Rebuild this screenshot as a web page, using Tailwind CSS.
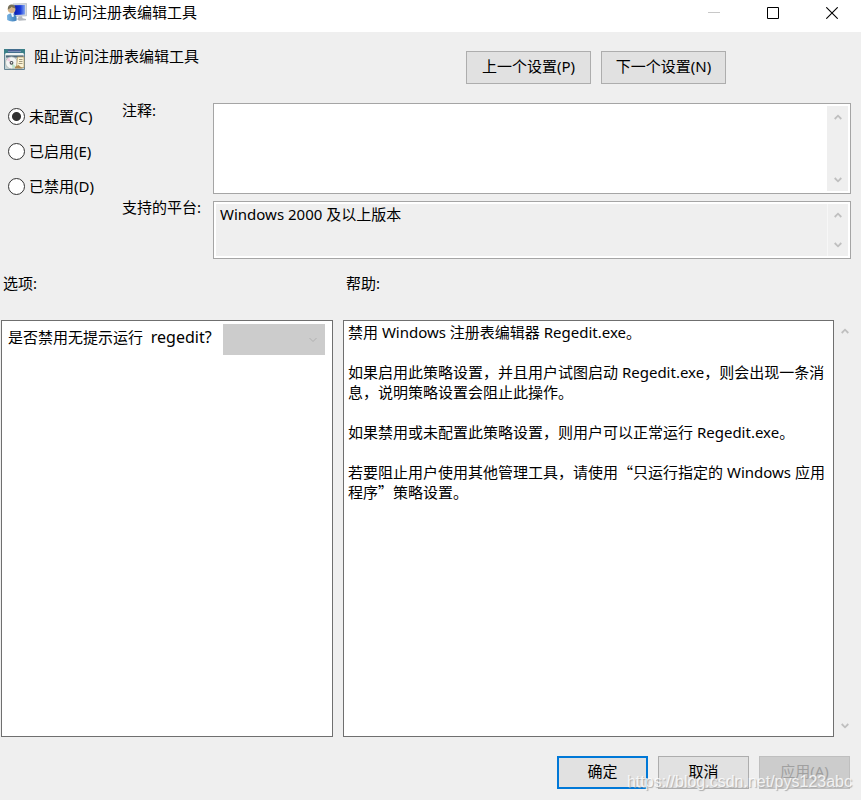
<!DOCTYPE html>
<html lang="zh-CN">
<head>
<meta charset="utf-8">
<meta name="viewport" content="width=device-width, initial-scale=1">
<title>阻止访问注册表编辑工具</title>
<script src="https://cdn.jsdelivr.net/npm/@tailwindcss/browser@4"></script>
</head>
<body class="relative flex min-h-screen flex-col bg-[#efefef] font-['Noto_Sans','Noto_Sans_CJK_SC',sans-serif] text-[15px] leading-5 text-black">
<svg class="hidden" aria-hidden="true">
  <symbol id="up" viewBox="0 0 8 6"><path d="M.7 5 4 1.7 7.3 5" fill="none" stroke="#bfbfbf" stroke-width="1.8"/></symbol>
  <symbol id="down" viewBox="0 0 8 6"><path d="M.7 1 4 4.3 7.3 1" fill="none" stroke="#bfbfbf" stroke-width="1.8"/></symbol>
</svg>

<header class="flex h-8 items-center bg-white pb-[6px] pl-[7px]">
  <svg class="h-5 w-5" viewBox="0 0 20 20" aria-hidden="true">
    <defs>
      <linearGradient id="screen" x1="0" x2="1"><stop offset="0" stop-color="#0a1fae"/><stop offset=".55" stop-color="#1738d8"/><stop offset="1" stop-color="#86a8f2"/></linearGradient>
      <linearGradient id="shirt" x1="0" x2="1"><stop offset="0" stop-color="#78b4e4"/><stop offset="1" stop-color="#3c7cb8"/></linearGradient>
    </defs>
    <path d="M6 .9 19.600.6V12.800L7 13.500z" fill="#d4dae0" stroke="#a6adb8" stroke-width=".6"/>
    <path d="M7.200 2.300 18 2V11.400L7.200 12z" fill="url(#screen)"/>
    <path d="M12 13.200h3l.6 2 3.400.8v1.200l-7 .6-2-1.600z" fill="#b4b9bf"/>
    <path d="M0 12.500c1-1.600 2.600-2 4.400-2 2.800 0 5 1.500 5.200 4.500v2.500C6.500 19 2.500 18.500.2 17z" fill="url(#shirt)"/>
    <circle cx="4.600" cy="6.300" r="3.800" fill="#d6b48a"/>
    <path d="M.8 6.500C.6 3 2.500 1.300 5 1.500c2.200.2 3.500 1.800 3.400 3.900-2-.2-3.200-.9-3.900-1.600C3.700 5.200 2.500 5.800.8 6.500z" fill="#76705a"/>
    <path d="M4 10.300 6 10.300 7 13.500 5 14z" fill="#f3f8fc"/>
  </svg>
  <h1 class="ml-[5px] flex-1 pb-[2px]">阻止访问注册表编辑工具</h1>
  <button class="flex h-[26px] w-[58px] items-center justify-center" aria-label="最小化" disabled>
    <svg class="h-3 w-3" viewBox="0 0 12 12"><path d="M0 5.500H12" stroke="#c8c8c8"/></svg>
  </button>
  <button class="flex h-[26px] w-[59px] items-center justify-center" aria-label="最大化">
    <svg class="h-3 w-3" viewBox="0 0 12 12"><path d="M.5.5H11.500V11.500H.5z" fill="none" stroke="#000"/></svg>
  </button>
  <button class="flex h-[26px] w-[59px] items-center justify-center" aria-label="关闭">
    <svg class="h-3 w-3" viewBox="0 0 12 12"><path d="M.3.3 11.700 11.700M11.700.3.3 11.700" stroke="#000" stroke-width="1.100"/></svg>
  </button>
</header>

<main class="flex flex-1 flex-col">
  <section class="flex items-start pt-[19px]">
    <div class="-mt-[2px] flex w-[466px] items-start pl-1">
      <svg class="h-[21px] w-[21px]" viewBox="0 0 21 21" aria-hidden="true">
        <path d="M.5.5H20.500V20.500H.5z" fill="#c4d2d4" stroke="#648292"/>
        <path d="M0 0H21V5H0z" fill="#3c7f88"/>
        <path d="M4 .5H16V3.500H4z" fill="#4a5f94"/>
        <path d="M4 2.500H17" stroke="#7c90b8"/>
        <path d="M1.500 4H19.500V6H1.500z" fill="#eef2f2"/>
        <path d="M2 6.500H19.500V8.500H2z" fill="#4f687c"/>
        <circle cx="7.500" cy="13.800" r="6" fill="#f2f4f3" stroke="#a5aaa8" stroke-width=".7"/>
        <path d="M7.500 13.800 2.500 11 5 8.500z" fill="#f0cfe0"/><path d="M7.500 13.800 12 17.500 8.500 19.500z" fill="#c0e4c8"/>
        <circle cx="7.500" cy="13.800" r="1.900" fill="#4c5055"/><circle cx="7.500" cy="13.800" r=".8" fill="#fff"/>
        <path d="M13.500 8H20V18.500H12.500z" fill="#fbf3d6" stroke="#b79c68" stroke-width=".8"/>
        <path d="M15 10.500H18.500M15 12.500H18.500M14.500 14.500H18.500" stroke="#a39a80"/>
        <path d="M11 18 14.500 16 18.500 19.500H11z" fill="#b08a50"/>
      </svg>
      <h2 class="-mt-[3px] ml-[9px]">阻止访问注册表编辑工具</h2>
    </div>
    <div class="flex gap-[10px]">
      <button class="h-[33px] w-[125px] border border-[#adadad] bg-[#e1e1e1] pb-1">上一个设置(P)</button>
      <button class="h-[33px] w-[125px] border border-[#adadad] bg-[#e1e1e1] pb-1">下一个设置(N)</button>
    </div>
  </section>

  <section class="mt-[19px] flex pr-[10px]">
    <fieldset class="flex w-[122px] flex-col gap-[15px] pt-[3px] pl-2">
      <label class="flex items-center gap-1 whitespace-nowrap"><input type="radio" name="state" checked class="h-[17px] w-[17px] appearance-none rounded-full border border-[#333] bg-white checked:bg-[radial-gradient(circle,#333_0_4px,#fff_5px)]">未配置(C)</label>
      <label class="flex items-center gap-1 whitespace-nowrap"><input type="radio" name="state" class="h-[17px] w-[17px] appearance-none rounded-full border border-[#333] bg-white checked:bg-[radial-gradient(circle,#333_0_4px,#fff_5px)]">已启用(E)</label>
      <label class="flex items-center gap-1 whitespace-nowrap"><input type="radio" name="state" class="h-[17px] w-[17px] appearance-none rounded-full border border-[#333] bg-white checked:bg-[radial-gradient(circle,#333_0_4px,#fff_5px)]">已禁用(D)</label>
    </fieldset>
    <div class="flex flex-1 flex-col gap-[7px]">
      <div class="flex">
        <label for="comment" class="-mt-[3px] w-[91px]">注释:</label>
        <div class="flex h-[91px] flex-1 border border-[#a5a5a5] bg-white p-[2px]">
          <textarea id="comment" class="flex-1 resize-none overflow-hidden px-1 outline-none"></textarea>
          <div class="flex w-[21px] flex-col items-center justify-between bg-[#efefef] py-2">
            <svg class="h-[6px] w-2"><use href="#up"/></svg><svg class="h-[6px] w-2"><use href="#down"/></svg>
          </div>
        </div>
      </div>
      <div class="flex">
        <label for="platform" class="-mt-[4px] w-[91px]">支持的平台:</label>
        <div class="flex h-[58px] flex-1 border border-[#a5a5a5] bg-white p-[2px]">
          <textarea id="platform" readonly class="flex-1 resize-none overflow-hidden bg-[#efefef] px-1 outline-none">Windows 2000 及以上版本</textarea>
          <div class="flex w-[21px] flex-col items-center justify-between border-l border-[#f7f7f7] bg-[#efefef] py-2">
            <svg class="h-[6px] w-2"><use href="#up"/></svg><svg class="h-[6px] w-2"><use href="#down"/></svg>
          </div>
        </div>
      </div>
    </div>
  </section>

  <section class="mt-[14px] flex flex-1 gap-[10px] pl-[1px]">
    <div class="flex w-[332px] flex-col">
      <h3 class="mb-[27px] pl-[2px]">选项:</h3>
      <div class="flex flex-1 items-start border border-[#6f6f6f] bg-white py-[3px] pr-[7px] pl-[6px]">
        <label for="silent" class="flex-1 pt-[3px] whitespace-nowrap">是否禁用无提示运行&nbsp; <span class="text-base leading-5">regedit?</span></label>
        <div class="relative">
          <select id="silent" disabled class="block h-[31px] w-[102px] appearance-none bg-[#ccc]"><option></option></select>
          <svg class="absolute top-3 right-2 h-2 w-2" viewBox="0 0 8 8"><path d="M.5 2 4 5.500 7.500 2" fill="none" stroke="#b0b0b0"/></svg>
        </div>
      </div>
    </div>
    <div class="flex flex-1 flex-col">
      <h3 class="mb-[27px] pl-[3px]">帮助:</h3>
      <div class="flex flex-1">
        <div class="flex flex-1 flex-col gap-5 border border-[#6f6f6f] bg-white px-1 pt-[1px]">
          <p>禁用 Windows 注册表编辑器 Regedit.exe。</p>
          <p>如果启用此策略设置，并且用户试图启动 Regedit.exe，则会出现一条消息，说明策略设置会阻止此操作。</p>
          <p>如果禁用或未配置此策略设置，则用户可以正常运行 Regedit.exe。</p>
          <p>若要阻止用户使用其他管理工具，请使用<span class="inline-block h-5 align-top font-['Noto_Sans_CJK_SC',sans-serif]">“</span>只运行指定的 Windows 应用程序<span class="inline-block h-5 align-top font-['Noto_Sans_CJK_SC',sans-serif]">”</span>策略设置。</p>
        </div>
        <div class="flex w-[27px] flex-col items-center justify-between py-2 pr-[6px]">
          <svg class="h-[6px] w-2"><use href="#up"/></svg><svg class="h-[6px] w-2"><use href="#down"/></svg>
        </div>
      </div>
    </div>
  </section>
</main>

<footer class="flex justify-end gap-[10px] pt-[19px] pr-[11px] pb-[11px]">
  <button class="h-[33px] w-[91px] border-2 border-[#0078d7] bg-[#e1e1e1] pb-[3px]">确定</button>
  <button class="h-[33px] w-[91px] border border-[#adadad] bg-[#e1e1e1] pb-[3px]">取消</button>
  <button disabled class="h-[33px] w-[91px] border border-[#bfbfbf] bg-[#ccc] pb-[3px] text-[#a0a0a0]">应用(A)</button>
</footer>
<span class="pointer-events-none absolute right-[9px] bottom-2 font-['Liberation_Sans',sans-serif] text-base leading-5 text-white/80 [text-shadow:1px_1px_1px_#aaa]">https://blog.csdn.net/pys123abc</span>
</body>
</html>
